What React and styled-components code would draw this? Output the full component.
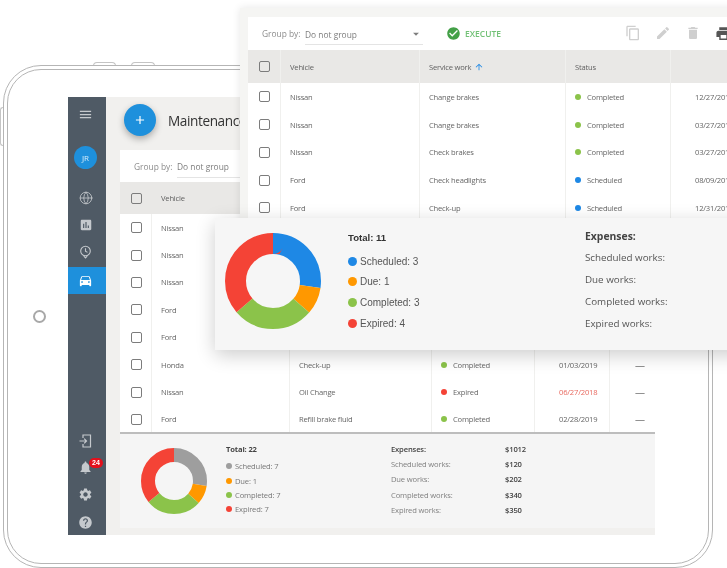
import styled, { createGlobalStyle } from 'styled-components'
import { Globe } from 'lucide-react'
import {
  MdMenu,
  MdAssessment,
  MdDirectionsCar,
  MdNotifications,
  MdSettings,
  MdHelp,
  MdAdd,
  MdCheckCircle,
  MdContentCopy,
  MdEdit,
  MdDelete,
  MdPrint,
  MdArrowUpward,
  MdArrowDropDown,
} from 'react-icons/md'

const colors = {
  blue: '#1e88e5',
  orange: '#ff9800',
  green: '#8bc34a',
  red: '#f44336',
  gray: '#9e9e9e',
}

const works = [
  { vehicle: 'Nissan', work: 'Change brakes', status: 'Completed', date: '12/27/2018' },
  { vehicle: 'Nissan', work: 'Change brakes', status: 'Completed', date: '03/27/2019' },
  { vehicle: 'Nissan', work: 'Check brakes', status: 'Completed', date: '03/27/2019' },
  { vehicle: 'Ford', work: 'Check headlights', status: 'Scheduled', date: '08/09/2019' },
  { vehicle: 'Ford', work: 'Check-up', status: 'Scheduled', date: '12/31/2018' },
  { vehicle: 'Honda', work: 'Check-up', status: 'Completed', date: '01/03/2019' },
  { vehicle: 'Nissan', work: 'Oil Change', status: 'Expired', date: '06/27/2018', late: true },
  { vehicle: 'Ford', work: 'Refill brake fluid', status: 'Completed', date: '02/28/2019' },
]

const statusColor = { Completed: colors.green, Scheduled: colors.blue, Expired: colors.red }

const GlobalStyle = createGlobalStyle`
  html, body {
    margin: 0;
    padding: 0;
    background: #fff;
  }
  * {
    box-sizing: border-box;
  }
`

const Stage = styled.div`
  position: relative;
  width: 727px;
  height: 568px;
  overflow: hidden;
  background: #fff;
  font-family: 'Open Sans', sans-serif;
  color: #555;
  filter: blur(0.35px);
`

const TabletFrame = styled.div`
  position: absolute;
  left: 3px;
  top: 65px;
  width: 710px;
  height: 503px;
  border: 1.5px solid #b5b5b5;
  border-radius: 38px;
  padding: 3px;
`

const TabletInner = styled.div`
  width: 100%;
  height: 100%;
  border: 1.5px solid #b5b5b5;
  border-radius: 34px;
`

const TopKey = styled.div`
  position: absolute;
  top: 62px;
  left: ${(props) => props.x}px;
  width: ${(props) => props.w}px;
  height: 4px;
  border: 1.5px solid #c4c4c4;
  border-bottom: none;
  border-radius: 4px 4px 0 0;
`

const SideKey = styled.div`
  position: absolute;
  left: 0;
  top: 107px;
  width: 4px;
  height: 39px;
  border: 1.5px solid #c4c4c4;
  border-right: none;
  border-radius: 3px 0 0 3px;
`

const HomeButton = styled.div`
  position: absolute;
  left: 33px;
  top: 310px;
  width: 13px;
  height: 13px;
  border: 2px solid #a8a8a8;
  border-radius: 50%;
`

const Screen = styled.div`
  position: absolute;
  left: 68px;
  top: 97px;
  width: 587px;
  height: 438px;
  display: flex;
`

const Sidebar = styled.nav`
  width: 38px;
  flex: none;
  background: #4f5a65;
  display: flex;
  flex-direction: column;
  align-items: stretch;
`

const SideItem = styled.div`
  height: ${(props) => props.h || 27}px;
  padding: ${(props) => props.top || 0}px 3px ${(props) => props.bottom || 0}px 0;
  display: flex;
  align-items: center;
  justify-content: center;
  position: relative;
  color: ${(props) => (props.active ? '#fff' : '#c5c9cd')};
  background: ${(props) => (props.active ? '#1e90dc' : 'transparent')};
`

const SideBottom = styled.div`
  margin-top: auto;
`

const Avatar = styled.div`
  width: 23px;
  height: 23px;
  border-radius: 50%;
  background: #1e90dc;
  color: #d5ecfb;
  font-size: 8px;
  display: flex;
  align-items: center;
  justify-content: center;
`

const Badge = styled.span`
  position: absolute;
  left: 21px;
  top: 4px;
  min-width: 14px;
  height: 10px;
  padding: 0 2px;
  border-radius: 5px;
  background: #e3101c;
  color: #fff;
  font: bold 7px/10px 'Liberation Sans', sans-serif;
  text-align: center;
`

const Main = styled.main`
  flex: 1;
  min-width: 0;
  background: #f1f0ee;
  padding-left: 14px;
  display: flex;
  flex-direction: column;
`

const TitleBar = styled.header`
  height: 53px;
  flex: none;
  display: flex;
  align-items: center;
  gap: 12px;
  padding: 0 0 7px 4px;
`

const Fab = styled.div`
  width: 32px;
  height: 32px;
  border-radius: 50%;
  background: #1e90dc;
  color: #fff;
  display: flex;
  align-items: center;
  justify-content: center;
  box-shadow: 0 3px 7px rgba(0, 0, 0, 0.3);
`

const Title = styled.h1`
  margin: 0;
  font-size: 13.6px;
  letter-spacing: -0.4px;
  font-weight: 400;
  color: #333;
`

const Toolbar = styled.div`
  height: ${(props) => props.h}px;
  flex: none;
  background: #fff;
  display: flex;
  align-items: center;
  padding-left: 14px;
  font-size: 8.4px;
  color: #8c8c8c;
`

const GroupLabel = styled.span`
  width: 43px;
  flex: none;
`

const GroupSelect = styled.div`
  position: relative;
  width: 118px;
  height: 21px;
  margin-top: 2px;
  border-bottom: 1px solid #e4e4e4;
  display: flex;
  align-items: center;
  justify-content: space-between;
  color: #7d7d7d;
`

const Execute = styled.div`
  display: flex;
  align-items: center;
  gap: 4px;
  margin-left: 23px;
  color: #72c176;
  font-size: 8.5px;
  font-weight: 600;
`

const ToolIcons = styled.div`
  display: flex;
  gap: 14px;
  margin-left: 124px;
  color: #cfcfcf;
`

const PrintIcon = styled(MdPrint)`
  color: #555;
`

const Row = styled.div`
  display: grid;
  grid-template-columns: ${(props) => props.columns};
  height: ${(props) => props.h}px;
  flex: none;
  background: ${(props) => (props.head ? '#e9e8e6' : '#fff')};
  font-size: 7.6px;
  letter-spacing: -0.2px;
  color: ${(props) => (props.head ? '#5f5f5f' : '#666')};
`

const Cell = styled.div`
  display: flex;
  align-items: center;
  gap: ${(props) => props.gap ?? 6}px;
  padding-left: ${(props) => props.pad ?? 9}px;
  border-left: 1px solid ${(props) => (props.bare ? 'transparent' : '#f0f0ee')};
  white-space: nowrap;
  color: ${(props) => (props.late ? '#e8695f' : 'inherit')};
`

const Dash = styled.span`
  font-size: 10px;
  letter-spacing: 0;
  color: #777;
`

const CheckCell = styled.div`
  display: flex;
  align-items: center;
  padding-left: 11px;
`

const CheckBox = styled.span`
  width: 11px;
  height: 11px;
  border: 1.5px solid #7c7c7c;
  border-radius: 2px;
  background: #fff;
`

const HeadCheck = styled(CheckBox)`
  background: transparent;
`

const StatusDot = styled.span`
  width: 6px;
  height: 6px;
  border-radius: 50%;
  flex: none;
  background: ${(props) => props.color};
`

const SortArrow = styled(MdArrowUpward)`
  color: ${colors.blue};
  margin-left: -1px;
`

const Footer = styled.section`
  margin-top: -1px;
  height: 96px;
  flex: none;
  border-top: 2px solid #bdbdbd;
  background: #f5f5f5;
  display: flex;
  align-items: flex-start;
  font-size: 7.6px;
  letter-spacing: -0.15px;
`

const BackDonutWrap = styled.div`
  width: 106px;
  padding: 14px 0 0 21px;
  flex: none;
`

const BackLegend = styled.div`
  width: 165px;
  flex: none;
  padding-top: 10px;
  color: #777;
`

const BackTotal = styled.div`
  font-weight: 700;
  color: #444;
  margin-bottom: 4px;
  line-height: 11px;
`

const BackLegendRow = styled.div`
  height: 14.4px;
  display: flex;
  align-items: center;
  gap: 3px;
`

const BackDot = styled.span`
  width: 6px;
  height: 6px;
  border-radius: 50%;
  background: ${(props) => props.color};
`

const BackExpenses = styled.div`
  padding-top: 7px;
  width: 150px;
  color: #808080;
`

const ExpenseRow = styled.div`
  display: grid;
  grid-template-columns: 114px 1fr;
  height: 15.3px;
  align-items: center;
  color: ${(props) => (props.strong ? '#444' : 'inherit')};
  font-weight: ${(props) => (props.strong ? 600 : 400)};
`

const ExpenseValue = styled.span`
  color: #444;
  font-weight: 600;
`

const FrontWindow = styled.div`
  position: absolute;
  left: 240px;
  top: 8px;
  width: 518px;
  height: 222px;
  background: #f5f5f3;
  padding: 9px 0 0 8px;
  box-shadow: 0 0 8px rgba(0, 0, 0, 0.1);
  display: flex;
  flex-direction: column;
`

const SummaryCard = styled.section`
  position: absolute;
  left: 215px;
  top: 218px;
  width: 540px;
  height: 132px;
  background: #f6f6f6;
  box-shadow: 0 5px 18px rgba(0, 0, 0, 0.2);
  display: flex;
  font-family: 'Liberation Sans', sans-serif;
  color: #555;
  font-size: 10px;
`

const CardDonut = styled.div`
  width: 133px;
  flex: none;
  padding: 15px 0 0 10px;
`

const CardLegend = styled.div`
  width: 237px;
  flex: none;
  padding-top: 13px;
`

const CardTotal = styled.div`
  font-size: 9.6px;
  font-weight: 700;
  color: #333;
  line-height: 13px;
  margin-bottom: 7px;
`

const CardLegendRow = styled.div`
  height: 20.6px;
  display: flex;
  align-items: center;
  gap: 3px;
`

const CardDot = styled.span`
  width: 9px;
  height: 9px;
  border-radius: 50%;
  background: ${(props) => props.color};
`

const CardExpenses = styled.div`
  padding-top: 11px;
  font-family: 'Open Sans', sans-serif;
  font-size: 9.8px;
`

const CardExpenseTitle = styled.div`
  font-size: 10.4px;
  font-weight: 700;
  color: #444;
  line-height: 14px;
  margin-bottom: 3px;
`

const CardExpenseRow = styled.div`
  height: 22px;
  display: flex;
  align-items: center;
`

function Donut({ size, outer, inner, segments }) {
  const r = (outer + inner) / 2
  const circ = 2 * Math.PI * r
  const total = segments.reduce((sum, s) => sum + s.value, 0)
  let done = 0
  return (
    <svg width={size} height={size} viewBox={`0 0 ${size} ${size}`}>
      <g transform={`rotate(-90 ${size / 2} ${size / 2})`}>
        {segments.map((s) => {
          const len = (s.value / total) * circ
          const el = (
            <circle
              key={s.color}
              cx={size / 2}
              cy={size / 2}
              r={r}
              fill="none"
              stroke={s.color}
              strokeWidth={outer - inner}
              strokeDasharray={`${len} ${circ - len}`}
              strokeDashoffset={-done}
            />
          )
          done += len
          return el
        })}
      </g>
    </svg>
  )
}

function PinClock() {
  return (
    <svg width="13" height="14" viewBox="0 0 13 14" fill="none" stroke="currentColor" strokeWidth="1.1">
      <circle cx="6.5" cy="6" r="4.8" />
      <path d="M6.5 3.2V6.2L8.5 7.4" />
      <path d="M4.8 11.2L6.5 13L8.2 11.2" />
    </svg>
  )
}

function ExitDoor() {
  return (
    <svg width="13" height="14" viewBox="0 0 13 14" fill="none" stroke="currentColor" strokeWidth="1.2">
      <path d="M4 4V1H11.5V13H4V10" />
      <path d="M0.5 7H7.5M5.2 4.7L7.5 7L5.2 9.3" />
    </svg>
  )
}

// rows of the back table that the front window covers only show their first cells
function WorkRow({ columns, h, work, datePad, covered }) {
  return (
    <Row columns={columns} h={h}>
      <CheckCell>
        <CheckBox />
      </CheckCell>
      <Cell>{work.vehicle}</Cell>
      <Cell>{!covered && work.work}</Cell>
      <Cell>
        {!covered && <StatusDot color={statusColor[work.status]} />}
        {!covered && work.status}
      </Cell>
      <Cell pad={datePad} late={work.late}>
        {!covered && work.date}
      </Cell>
      <Cell pad={25}>{!covered && <Dash>—</Dash>}</Cell>
    </Row>
  )
}

const backColumns = '31px 138px 142px 103px 75px 46px'
const frontColumns = '32px 139px 146px 105px 98px 46px'

const backSegments = [
  { color: colors.gray, value: 3 },
  { color: colors.orange, value: 1 },
  { color: colors.green, value: 3 },
  { color: colors.red, value: 4 },
]

const frontSegments = [
  { color: colors.blue, value: 3 },
  { color: colors.orange, value: 1 },
  { color: colors.green, value: 3 },
  { color: colors.red, value: 4 },
]

export default function App() {
  return (
    <Stage>
      <GlobalStyle />
      <TopKey x={93} w={23} />
      <TopKey x={131} w={24} />
      <SideKey />
      <TabletFrame>
        <TabletInner />
      </TabletFrame>
      <HomeButton />

      <Screen>
        <Sidebar>
          <SideItem h={34}>
            <MdMenu size={15} />
          </SideItem>
          <SideItem h={53}>
            <Avatar>JR</Avatar>
          </SideItem>
          <SideItem h={28}>
            <Globe size={14} strokeWidth={1.4} />
          </SideItem>
          <SideItem h={26}>
            <MdAssessment size={14} />
          </SideItem>
          <SideItem h={29} bottom={2}>
            <PinClock />
          </SideItem>
          <SideItem h={27} active>
            <MdDirectionsCar size={15} />
          </SideItem>
          <SideBottom>
            <SideItem h={27}>
              <ExitDoor />
            </SideItem>
            <SideItem h={27}>
              <MdNotifications size={15} />
              <Badge>24</Badge>
            </SideItem>
            <SideItem h={27}>
              <MdSettings size={15} />
            </SideItem>
            <SideItem h={27} top={2}>
              <MdHelp size={15} />
            </SideItem>
          </SideBottom>
        </Sidebar>
        <Main>
          <TitleBar>
            <Fab>
              <MdAdd size={14} />
            </Fab>
            <Title>Maintenance</Title>
          </TitleBar>
          <Toolbar h={32}>
            <GroupLabel>Group by:</GroupLabel>
            <GroupSelect>Do not group</GroupSelect>
          </Toolbar>
          <Row columns={backColumns} h={32} head>
            <CheckCell>
              <HeadCheck />
            </CheckCell>
            <Cell bare>Vehicle</Cell>
          </Row>
          {works.map((work, i) => (
            <WorkRow key={i} columns={backColumns} h={27.4} work={work} datePad={24} covered={i < 5} />
          ))}
          <Footer>
            <BackDonutWrap>
              <Donut size={66} outer={33} inner={19} segments={backSegments} />
            </BackDonutWrap>
            <BackLegend>
              <BackTotal>Total: 22</BackTotal>
              <BackLegendRow>
                <BackDot color={colors.gray} />
                Scheduled: 7
              </BackLegendRow>
              <BackLegendRow>
                <BackDot color={colors.orange} />
                Due: 1
              </BackLegendRow>
              <BackLegendRow>
                <BackDot color={colors.green} />
                Completed: 7
              </BackLegendRow>
              <BackLegendRow>
                <BackDot color={colors.red} />
                Expired: 7
              </BackLegendRow>
            </BackLegend>
            <BackExpenses>
              <ExpenseRow strong>
                <span>Expenses:</span>
                <ExpenseValue>$1012</ExpenseValue>
              </ExpenseRow>
              <ExpenseRow>
                <span>Scheduled works:</span>
                <ExpenseValue>$120</ExpenseValue>
              </ExpenseRow>
              <ExpenseRow>
                <span>Due works:</span>
                <ExpenseValue>$202</ExpenseValue>
              </ExpenseRow>
              <ExpenseRow>
                <span>Completed works:</span>
                <ExpenseValue>$340</ExpenseValue>
              </ExpenseRow>
              <ExpenseRow>
                <span>Expired works:</span>
                <ExpenseValue>$350</ExpenseValue>
              </ExpenseRow>
            </BackExpenses>
          </Footer>
        </Main>
      </Screen>

      <FrontWindow>
        <Toolbar h={33}>
          <GroupLabel>Group by:</GroupLabel>
          <GroupSelect>
            Do not group
            <MdArrowDropDown size={14} />
          </GroupSelect>
          <Execute>
            <MdCheckCircle size={15} color="#43a047" />
            EXECUTE
          </Execute>
          <ToolIcons>
            <MdContentCopy size={16} />
            <MdEdit size={16} />
            <MdDelete size={16} />
            <PrintIcon size={17} />
          </ToolIcons>
        </Toolbar>
        <Row columns={frontColumns} h={33} head>
          <CheckCell>
            <HeadCheck />
          </CheckCell>
          <Cell>Vehicle</Cell>
          <Cell gap={4}>
            Service work
            <SortArrow size={10} />
          </Cell>
          <Cell>Status</Cell>
          <Cell />
          <Cell />
        </Row>
        {works.slice(0, 5).map((work, i) => (
          <WorkRow key={i} columns={frontColumns} h={27.75} work={work} datePad={24} />
        ))}
      </FrontWindow>

      <SummaryCard>
        <CardDonut>
          <Donut size={96} outer={48} inner={27} segments={frontSegments} />
        </CardDonut>
        <CardLegend>
          <CardTotal>Total: 11</CardTotal>
          <CardLegendRow>
            <CardDot color={colors.blue} />
            Scheduled: 3
          </CardLegendRow>
          <CardLegendRow>
            <CardDot color={colors.orange} />
            Due: 1
          </CardLegendRow>
          <CardLegendRow>
            <CardDot color={colors.green} />
            Completed: 3
          </CardLegendRow>
          <CardLegendRow>
            <CardDot color={colors.red} />
            Expired: 4
          </CardLegendRow>
        </CardLegend>
        <CardExpenses>
          <CardExpenseTitle>Expenses:</CardExpenseTitle>
          <CardExpenseRow>Scheduled works:</CardExpenseRow>
          <CardExpenseRow>Due works:</CardExpenseRow>
          <CardExpenseRow>Completed works:</CardExpenseRow>
          <CardExpenseRow>Expired works:</CardExpenseRow>
        </CardExpenses>
      </SummaryCard>
    </Stage>
  )
}
